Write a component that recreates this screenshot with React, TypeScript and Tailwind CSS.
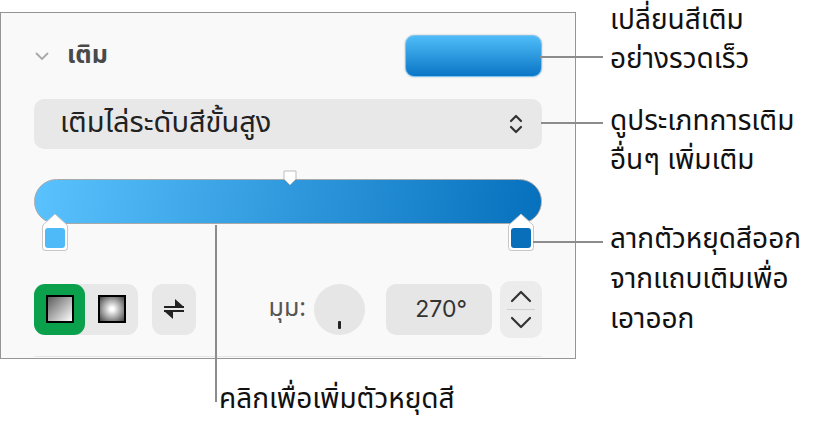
import React from "react";

const thai = "font-['Noto_Sans_Thai','Noto_Sans','Liberation_Sans',sans-serif]";

function Chevron({ up }: { up?: boolean }) {
  return (
    <svg width="22" height="13" viewBox="0 0 22 13" fill="none">
      <path
        d={up ? "M2 11 L11 2 L20 11" : "M2 2 L11 11 L20 2"}
        stroke="#333"
        strokeWidth="2.2"
        strokeLinecap="round"
        strokeLinejoin="round"
      />
    </svg>
  );
}

function Stop({ color }: { color: string }) {
  return (
    <div className="relative flex h-[38px] w-[26px] flex-col items-center">
      <svg width="26" height="14" viewBox="0 0 26 14" className="-mb-px">
        <path d="M1 14 L1 12 L13 1 L25 12 L25 14" fill="#fff" stroke="#c8c8c8" strokeWidth="1" />
      </svg>
      <div className="flex h-[25px] w-[26px] items-center justify-center rounded-b-[4px] border border-t-0 border-[#c8c8c8] bg-white">
        <div className="h-[20px] w-[20px] rounded-[3px]" style={{ background: color }} />
      </div>
    </div>
  );
}

export default function App() {
  return (
    <div className={`relative h-[431px] w-[825px] overflow-hidden bg-white ${thai}`}>
      {/* panel */}
      <div className="mt-[12px] h-[347px] w-[576px] border border-[#959595] bg-[#f9f9f9] px-[33px]">
        {/* header */}
        <div className="mt-[22px] flex h-[42px] items-center justify-between">
          <div className="flex items-center">
            <svg width="14" height="9" viewBox="0 0 14 9" className="ml-[1px]">
              <path d="M1.5 1.5 L7 7 L12.5 1.5" fill="none" stroke="#a8a8a8" strokeWidth="1.8" strokeLinecap="round" />
            </svg>
            <span className="ml-[18px] text-[25px] font-bold text-[#4a4a4a]">เติม</span>
          </div>
          <div className="h-[42px] w-[137px] rounded-[9px] border border-[#7cc4ef] bg-[linear-gradient(#4fbcf8,#0a76c6)] shadow-[0_0_2px_rgba(0,0,0,0.25)]" />
        </div>

        {/* popup */}
        <div className="mt-[22px] flex h-[50px] items-center justify-between rounded-[10px] bg-[#e8e8e8] pl-[26px] pr-[18px]">
          <span className="text-[29px] text-[#222]">เติมไล่ระดับสีขั้นสูง</span>
          <svg width="16" height="22" viewBox="0 0 16 22" fill="none">
            <path d="M3 8 L8 3 L13 8 M3 14 L8 19 L13 14" stroke="#333" strokeWidth="2.2" strokeLinecap="round" strokeLinejoin="round" />
          </svg>
        </div>

        {/* gradient bar */}
        <div className="relative mt-[30px] h-[74px]">
          <div className="absolute left-[249px] top-[-9px] z-10">
            <svg width="14" height="16" viewBox="0 0 14 16">
              <path d="M1 1 H13 V9 L7 15 L1 9 Z" fill="#fff" stroke="#bdbdbd" strokeWidth="1" />
            </svg>
          </div>
          <div className="h-[45px] w-full rounded-full border border-[#a9a9a9] bg-[linear-gradient(100deg,#5ac2fd,#0670bd)]" />
          <div className="absolute left-[8px] top-[34px]">
            <Stop color="#4fbaf8" />
          </div>
          <div className="absolute left-[474px] top-[34px]">
            <Stop color="#0a6fbb" />
          </div>
        </div>

        {/* bottom row */}
        <div className="mt-[30px] flex h-[52px] items-center">
          <div className="flex h-[51px] w-[104px] shrink-0 rounded-[11px] bg-[#e8e8e8]">
            <div className="flex h-[51px] w-[51px] items-center justify-center rounded-[11px] bg-[#0aa04c]">
              <div className="h-[28px] w-[28px] border-2 border-black bg-[linear-gradient(135deg,#5c5c5c,#ffffff)]" />
            </div>
            <div className="flex h-[51px] w-[53px] items-center justify-center">
              <div className="h-[28px] w-[28px] border-2 border-black bg-[radial-gradient(circle,#ffffff_10%,#444444_100%)]" />
            </div>
          </div>
          <div className="ml-[14px] flex h-[51px] w-[44px] shrink-0 items-center justify-center rounded-[11px] bg-[#e8e8e8]">
            <svg width="26" height="26" viewBox="0 0 26 26">
              <path d="M3 11 H23" stroke="#222" strokeWidth="2" />
              <path d="M14 3 L23 11 L14 11 Z" fill="#222" />
              <path d="M3 15 H23" stroke="#222" strokeWidth="2" />
              <path d="M12 23 L3 15 L12 15 Z" fill="#222" />
            </svg>
          </div>
          <div className="ml-auto flex items-center">
            <span className="text-[25px] text-[#555]">มุม:</span>
            <div className="ml-[8px] flex h-[51px] w-[51px] items-end justify-center rounded-full bg-[#e6e6e6] pb-[6px]">
              <div className="h-[8px] w-[3px] rounded-[1px] bg-[#222]" />
            </div>
            <div className="ml-[21px] flex h-[51px] w-[106px] items-center justify-end rounded-[10px] bg-[#e6e6e6] pr-[25px]">
              <span className="font-['Inter',sans-serif] text-[23px] text-[#333]">270°</span>
            </div>
            <div className="ml-[8px] flex h-[57px] w-[42px] flex-col items-center justify-center gap-[6px] rounded-[10px] bg-[#ececec]">
              <Chevron up />
              <div className="h-px w-[28px] bg-[#d0d0d0]" />
              <Chevron />
            </div>
          </div>
        </div>
        <div className="mt-[21px] h-px w-full bg-[#e6e6e6]" />
      </div>

      {/* callout lines */}
      <div className="absolute left-[540px] top-[56px] h-[2px] w-[63px] bg-[#8c8c8c]" />
      <div className="absolute left-[541px] top-[122px] h-[2px] w-[62px] bg-[#8c8c8c]" />
      <div className="absolute left-[533px] top-[241px] h-[2px] w-[70px] bg-[#8c8c8c]" />
      <div className="absolute left-[215px] top-[225px] h-[177px] w-[2px] bg-[#8c8c8c]" />

      {/* callout labels */}
      <div className="absolute left-[610px] top-[1px] text-[28px] leading-[39px] text-[#111]">
        เปลี่ยนสีเติม
        <br />
        อย่างรวดเร็ว
      </div>
      <div className="absolute left-[610px] top-[102px] text-[28px] leading-[39px] text-[#111]">
        ดูประเภทการเติม
        <br />
        อื่นๆ เพิ่มเติม
      </div>
      <div className="absolute left-[610px] top-[220px] text-[28px] leading-[40px] text-[#111]">
        ลากตัวหยุดสีออก
        <br />
        จากแถบเติมเพื่อ
        <br />
        เอาออก
      </div>
      <div className="absolute left-[219px] top-[380px] text-[28px] leading-[40px] text-[#111]">
        คลิกเพื่อเพิ่มตัวหยุดสี
      </div>
    </div>
  );
}
